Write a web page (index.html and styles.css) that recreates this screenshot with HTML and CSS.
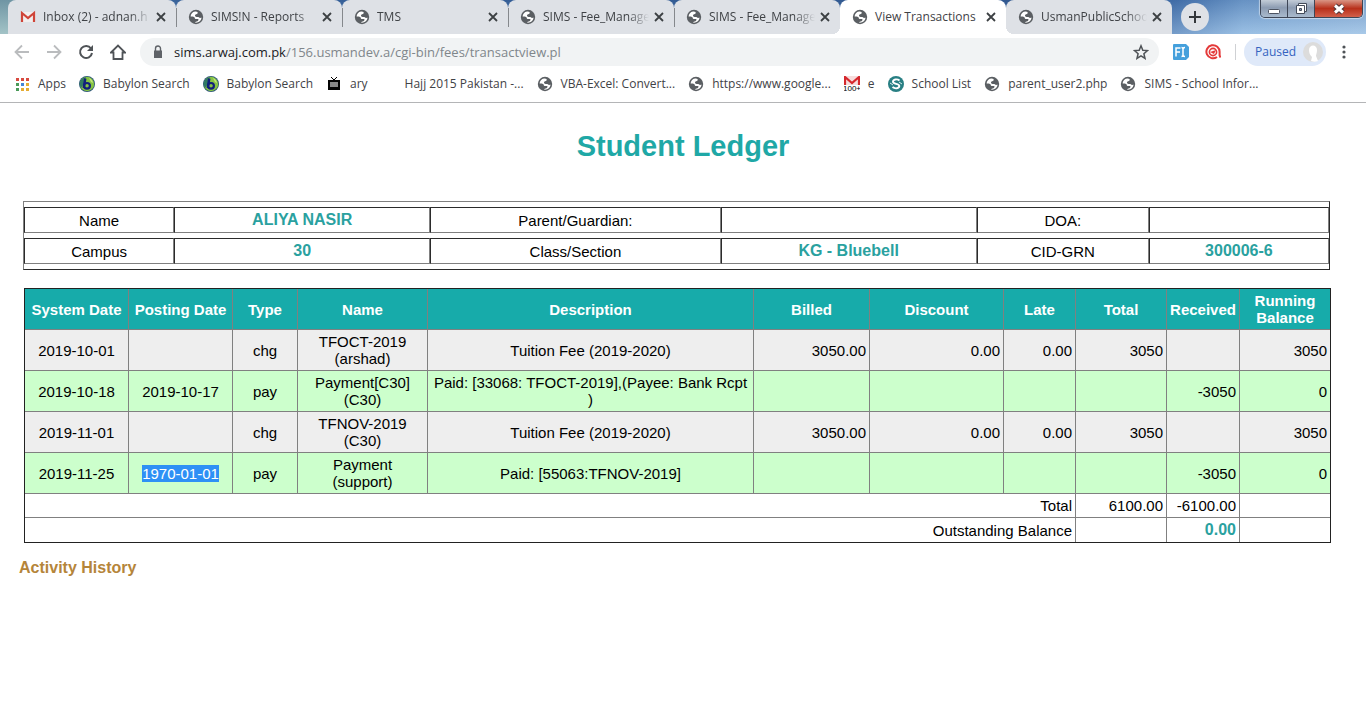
FILE: index.html
```html
<!DOCTYPE html>
<html lang="en">
<head>
<meta charset="utf-8">
<title>View Transactions</title>
<link rel="stylesheet" href="styles.css">
</head>
<body>
<svg class="defs" aria-hidden="true">
  <symbol id="globe" viewBox="0 0 16 16">
    <circle cx="8" cy="8" r="7.200" fill="#5b5f63"/>
    <path d="M7 2.600C4.500 3 2.700 5 2.600 7.500c1.300.2 2.700.1 3.500.6 1 .6.300 1.500 1.300 1.900 1 .3 1.700-.3 2.700.1.900.5.200 1.700-.6 2.100l-1.700.5c-.5.200-.7.600-.5 1 2 .100 4.300-.700 5.500-2.600.5-.8.700-1.600.7-2.500-.9.300-1.900.300-2.500-.3-.6-.6-1.500-.3-2.400-.4-1-.2-1.600-1-1.100-1.800.4-.7 1.600-.3 2.200-.9.500-.5-.1-1.300.3-1.900-.9-.6-2-.8-3-.700z" fill="#fff"/>
    <path d="M9.500 3.200c.5 1-.2 2-1.200 2.100-1 .2-1.500.9-1.200 1.700.5 1 2.300.4 3.300 1 .8.500 2 .7 2.900.2A5.600 5.600 0 0 0 9.500 3.200z" fill="#5b5f63"/>
  </symbol>
  <symbol id="close" viewBox="0 0 16 16"><path d="M4 4l8 8M12 4l-8 8" stroke="#3c4043" stroke-width="1.800" fill="none"/></symbol>
  <symbol id="babylon" viewBox="0 0 16 16">
    <circle cx="8" cy="8" r="8" fill="#2b5578"/>
    <circle cx="8" cy="8" r="7.200" fill="#86c443"/>
    <path d="M2 4a7 7 0 0 1 5-3L5 8l-3 4A7 7 0 0 1 2 4z" fill="#317b62"/>
    <path d="M10 2a6.500 6.500 0 0 1 4 5l-2-1z" fill="#c4e57c"/>
    <path d="M6.300 2.500L4.700 12" stroke="#12207c" stroke-width="2.400"/>
    <ellipse cx="8" cy="9.800" rx="2.900" ry="2.800" fill="none" stroke="#12207c" stroke-width="2.200"/>
  </symbol>
</svg>

<header class="browser">
  <div class="strip">
    <div class="tab tab-first">
      <svg class="icon" viewBox="0 0 16 16"><path d="M2 3h12v10H2z" fill="#f1eeee"/><path d="M2 13V4l6 5 6-5v9" fill="none" stroke="#cf4438" stroke-width="2.200"/></svg>
      <span class="tab-title">Inbox (2) - adnan.h</span>
      <button class="tab-close" aria-label="Close tab"><svg class="icon"><use href="#close"/></svg></button>
    </div>
    <div class="tab"><svg class="icon"><use href="#globe"/></svg><span class="tab-title">SIMS!N - Reports</span><button class="tab-close" aria-label="Close tab"><svg class="icon"><use href="#close"/></svg></button></div>
    <div class="tab"><svg class="icon"><use href="#globe"/></svg><span class="tab-title">TMS</span><button class="tab-close" aria-label="Close tab"><svg class="icon"><use href="#close"/></svg></button></div>
    <div class="tab"><svg class="icon"><use href="#globe"/></svg><span class="tab-title">SIMS - Fee_Manage</span><button class="tab-close" aria-label="Close tab"><svg class="icon"><use href="#close"/></svg></button></div>
    <div class="tab"><svg class="icon"><use href="#globe"/></svg><span class="tab-title">SIMS - Fee_Manage</span><button class="tab-close" aria-label="Close tab"><svg class="icon"><use href="#close"/></svg></button></div>
    <div class="tab tab-active"><svg class="icon"><use href="#globe"/></svg><span class="tab-title">View Transactions</span><button class="tab-close" aria-label="Close tab"><svg class="icon"><use href="#close"/></svg></button></div>
    <div class="tab tab-last"><svg class="icon"><use href="#globe"/></svg><span class="tab-title">UsmanPublicSchoo</span><button class="tab-close" aria-label="Close tab"><svg class="icon"><use href="#close"/></svg></button></div>
    <button class="new-tab" aria-label="New tab"><svg class="icon" viewBox="0 0 16 16"><path d="M8 2v12M2 8h12" stroke="#33373b" stroke-width="2"/></svg></button>
    <div class="window-buttons">
      <button class="win" aria-label="Minimize"><svg class="icon" viewBox="0 0 16 16"><rect x="2.500" y="8.500" width="11" height="4" rx="1" fill="#fff" stroke="#4c5361"/></svg></button>
      <button class="win" aria-label="Restore"><svg class="icon" viewBox="0 0 16 16"><path d="M5.500 2.500h8v8h-8z" fill="#fff" stroke="#444c5a"/><path d="M3.500 4.500h8v8h-8z" fill="#fff" stroke="#444c5a"/><path d="M6.500 7.500h2v2h-2z" fill="#8799b3" stroke="#444c5a"/></svg></button>
      <button class="win win-close" aria-label="Close"><svg class="icon" viewBox="0 0 16 16"><path d="M4 4.500l8 7M12 4.500l-8 7" stroke="#4b3337" stroke-width="5"/><path d="M4 4.500l8 7M12 4.500l-8 7" stroke="#fff" stroke-width="3"/></svg></button>
    </div>
  </div>

  <div class="toolbar">
    <button class="tool" aria-label="Back"><svg class="icon" viewBox="0 0 16 16"><path d="M15 8H2M8 1.500L1.500 8 8 14.500" fill="none" stroke="#babcbe" stroke-width="1.800"/></svg></button>
    <button class="tool" aria-label="Forward"><svg class="icon" viewBox="0 0 16 16"><path d="M1 8h13M8 1.500L14.500 8 8 14.500" fill="none" stroke="#babcbe" stroke-width="1.800"/></svg></button>
    <button class="tool" aria-label="Reload"><svg class="icon" viewBox="0 0 16 16"><path d="M13 4.500A6 6 0 1 0 14 9" fill="none" stroke="#4f5357" stroke-width="2"/><path d="M15 1v6H9z" fill="#4f5357"/></svg></button>
    <button class="tool" aria-label="Home"><svg class="icon" viewBox="0 0 16 16"><path d="M1 8.500L8 1.500l7 7h-2.500V15h-9V8.500z" fill="none" stroke="#4f5357" stroke-width="1.800"/></svg></button>
    <div class="omnibox">
      <svg class="icon" viewBox="0 0 16 16"><path d="M4 6.500h8V14H4z" fill="#5f6368"/><path d="M5.500 7V4.500a2.500 2.500 0 0 1 5 0V7" fill="none" stroke="#5f6368" stroke-width="1.400"/></svg>
      <span class="url">sims.arwaj.com.pk<span class="url-path">/156.usmandev.a/cgi-bin/fees/transactview.pl</span></span>
      <button class="tool star" aria-label="Bookmark this page"><svg class="icon" viewBox="0 0 16 16"><path d="M8 1.800l1.800 4.400 4.700.4-3.600 3.100 1.100 4.600L8 11.800l-4 2.500 1.100-4.600L1.500 6.600l4.700-.4z" fill="none" stroke="#4f5357" stroke-width="1.500"/></svg></button>
    </div>
    <div class="extensions">
      <button class="tool" aria-label="Form filler"><svg class="icon" viewBox="0 0 16 16"><path d="M1 0h12l3 3v10l-3 3H1a1 1 0 0 1-1-1V1a1 1 0 0 1 1-1z" fill="#45a0dc"/><path d="M3 12.500V4h4.500M3 8h4M8.500 3.500c1 0 1.500.5 1.500 1.500v6c0 1-.5 1.500-1.500 1.500M12 3.500c-1.200 0-2 .5-2 1.500M12 12.500c-1.200 0-2-.5-2-1.500" fill="none" stroke="#fff" stroke-width="1.500"/></svg></button>
      <button class="tool" aria-label="Search extension"><svg class="icon" viewBox="0 0 16 16"><path d="M12 13a6.600 6.600 0 1 1 2.600-5v3.500l1 2" fill="none" stroke="#e43a3a" stroke-width="2"/><circle cx="8" cy="8" r="3.600" fill="none" stroke="#e43a3a" stroke-width="1.600"/><path d="M5 8l6-2-2 4z" fill="#e43a3a"/></svg></button>
    </div>
    <button class="profile">Paused <svg class="avatar" viewBox="0 0 20 20"><circle cx="10" cy="10" r="10" fill="#dcdcdc"/><path d="M6 8c0-6 8-6 8 0 0 3-1 4-1 6l2 5a10 10 0 0 1-7 0l1-4C7 13 6 11 6 8z" fill="#fff"/></svg></button>
    <button class="tool" aria-label="Menu"><svg class="icon" viewBox="0 0 16 16" fill="#4f5357"><circle cx="8" cy="3" r="1.600"/><circle cx="8" cy="8" r="1.600"/><circle cx="8" cy="13" r="1.600"/></svg></button>
  </div>

  <nav class="bookmarks">
    <a class="bookmark" href="#"><svg class="icon" viewBox="0 0 16 16"><path d="M2 2h3v3H2zM7 2h3v3H7zM12 2h3v3h-3z" fill="#d84a40"/><path d="M2 7h3v3H2zM2 12h3v3H2z" fill="#4a9a59"/><path d="M7 7h3v3H7z" fill="#4285d8"/><path d="M12 7h3v3h-3zM7 12h3v3H7zM12 12h3v3h-3z" fill="#e5ac33"/></svg>Apps</a>
    <a class="bookmark" href="#"><svg class="icon"><use href="#babylon"/></svg>Babylon Search</a>
    <a class="bookmark" href="#"><svg class="icon"><use href="#babylon"/></svg>Babylon Search</a>
    <a class="bookmark" href="#"><svg class="icon" viewBox="0 0 16 16"><path d="M5 1l3 3 3-3" fill="none" stroke="#000"/><path d="M2 4h12v10H2z" fill="#050505"/><path d="M4 6h8v5H4z" fill="#888"/></svg>ary</a>
    <a class="bookmark" href="#"><span class="icon"></span>Hajj 2015 Pakistan -...</a>
    <a class="bookmark" href="#"><svg class="icon"><use href="#globe"/></svg>VBA-Excel: Convert...</a>
    <a class="bookmark" href="#"><svg class="icon"><use href="#globe"/></svg>https://www.google...</a>
    <a class="bookmark" href="#"><svg class="icon" viewBox="0 0 16 16"><path d="M0 0h16v9H0z" fill="#f7dddd"/><path d="M1 9V1l7 6 7-6v8" fill="none" stroke="#d5282d" stroke-width="2.200"/><text x="8" y="15" text-anchor="middle" class="badge">100+</text></svg>e</a>
    <a class="bookmark" href="#"><svg class="icon" viewBox="0 0 16 16"><circle cx="8" cy="8" r="8" fill="#287f83"/><path d="M11.500 4.500C9 2.500 5 3.500 5 5.800c0 2.800 6.300 1.400 6.300 4.300 0 2.500-4.300 3-6.800 1" fill="none" stroke="#fff" stroke-width="1.900"/><path d="M2 7l3 2M14 8l-3-2" stroke="#d7eeee"/></svg>School List</a>
    <a class="bookmark" href="#"><svg class="icon"><use href="#globe"/></svg>parent_user2.php</a>
    <a class="bookmark" href="#"><svg class="icon"><use href="#globe"/></svg>SIMS - School Infor...</a>
  </nav>
</header>

<main class="page">
  <h1 class="title">Student Ledger</h1>

  <div class="tables">
    <table class="info">
      <colgroup><col class="w150"><col class="w256"><col class="w290"><col class="w256"><col class="w172"><col class="w180"></colgroup>
      <tbody>
        <tr><td>Name</td><td class="value">ALIYA NASIR</td><td>Parent/Guardian:</td><td class="value"></td><td>DOA:</td><td class="value"></td></tr>
        <tr><td>Campus</td><td class="value">30</td><td>Class/Section</td><td class="value">KG - Bluebell</td><td>CID-GRN</td><td class="value">300006-6</td></tr>
      </tbody>
    </table>

    <table class="ledger">
      <colgroup><col class="w104"><col class="w104"><col class="w65"><col class="w130"><col class="w326"><col class="w116"><col class="w134"><col class="w72"><col class="w91"><col class="w73"><col class="w90"></colgroup>
      <thead>
        <tr><th>System Date</th><th>Posting Date</th><th>Type</th><th>Name</th><th>Description</th><th>Billed</th><th>Discount</th><th>Late</th><th>Total</th><th>Received</th><th>Running Balance</th></tr>
      </thead>
      <tbody>
        <tr class="charge"><td>2019-10-01</td><td></td><td>chg</td><td>TFOCT-2019<br>(arshad)</td><td>Tuition Fee (2019-2020)</td><td class="num">3050.00</td><td class="num">0.00</td><td class="num">0.00</td><td class="num">3050</td><td class="num"></td><td class="num">3050</td></tr>
        <tr class="payment"><td>2019-10-18</td><td>2019-10-17</td><td>pay</td><td>Payment[C30]<br>(C30)</td><td>Paid: [33068: TFOCT-2019],(Payee: Bank Rcpt )</td><td></td><td></td><td></td><td></td><td class="num">-3050</td><td class="num">0</td></tr>
        <tr class="charge"><td>2019-11-01</td><td></td><td>chg</td><td>TFNOV-2019<br>(C30)</td><td>Tuition Fee (2019-2020)</td><td class="num">3050.00</td><td class="num">0.00</td><td class="num">0.00</td><td class="num">3050</td><td class="num"></td><td class="num">3050</td></tr>
        <tr class="payment"><td>2019-11-25</td><td><span class="selected">1970-01-01</span></td><td>pay</td><td>Payment<br>(support)</td><td>Paid: [55063:TFNOV-2019]</td><td></td><td></td><td></td><td></td><td class="num">-3050</td><td class="num">0</td></tr>
      </tbody>
      <tfoot>
        <tr><td class="num" colspan="8">Total</td><td class="num">6100.00</td><td class="num">-6100.00</td><td></td></tr>
        <tr><td class="num" colspan="8">Outstanding Balance</td><td></td><td class="num value">0.00</td><td></td></tr>
      </tfoot>
    </table>
  </div>

  <a class="history" href="#">Activity History</a>
</main>
</body>
</html>
```
FILE: styles.css
```css
* { box-sizing: border-box; }

body {
  margin: 0;
  background: #fff;
  color: #000;
  font: 15px/17px "Liberation Sans", Arial, sans-serif;
}

button {
  margin: 0;
  padding: 0;
  border: 0;
  background: none;
  font: inherit;
  color: inherit;
}

a { text-decoration: none; }

.defs { position: absolute; width: 0; height: 0; }
.icon { display: block; flex: none; width: 16px; height: 16px; }

/* Browser frame */
.browser {
  font: 12px/16px "Open Sans", "Noto Sans", sans-serif;
  color: #3f4246;
  border-bottom: 1px solid #b4b5b7;
}

.strip {
  display: flex;
  align-items: center;
  height: 34px;
  padding: 0 3px 0 8px;
  background:
    linear-gradient(to bottom, rgba(40, 80, 140, .3), rgba(200, 225, 245, .35)),
    linear-gradient(to right, #8fb3ae 0, #8fb3ae 8px, #3d689f 180px, #31588f 80%, #4a78b2 86%, #82aedb 91%, #98bde2 100%);
}

.tab {
  position: relative;
  display: flex;
  align-items: center;
  flex: 0 1 166px;
  min-width: 0;
  height: 34px;
  padding: 0 7px 0 12px;
  background: #dee1e6;
  border-radius: 8px 8px 0 0;
}

.tab-first { flex-basis: 168px; }

.tab + .tab::before {
  content: "";
  position: absolute;
  left: 0;
  top: 8px;
  width: 1px;
  height: 19px;
  background: #85888c;
}

.tab + .tab-active::before,
.tab + .tab-last::before { display: none; }

.tab-active { background: #fff; }

.tab-active::after {
  content: "";
  position: absolute;
  left: -8px;
  right: -8px;
  bottom: 0;
  height: 8px;
  background:
    radial-gradient(circle at 0 0, transparent 8px, #fff 8px) left / 8px 8px no-repeat,
    radial-gradient(circle at 100% 0, transparent 8px, #fff 8px) right / 8px 8px no-repeat;
  z-index: 1;
}

.tab-title {
  flex: 1;
  min-width: 0;
  margin: 0 2px 0 7px;
  white-space: nowrap;
  -webkit-mask-image: linear-gradient(to right, #000 80%, transparent);
  mask-image: linear-gradient(to right, #000 80%, transparent);
}

.tab-active .tab-title { -webkit-mask-image: none; mask-image: none; }

.new-tab {
  display: grid;
  place-items: center;
  flex: none;
  width: 28px;
  height: 28px;
  margin-left: 9px;
  border-radius: 50%;
  background: #dee1e6;
}

.window-buttons {
  display: flex;
  align-self: flex-start;
  height: 18px;
  margin-left: auto;
  border: 1px solid #3e4656;
  border-top: 0;
  border-radius: 0 0 5px 5px;
  overflow: hidden;
  box-shadow: 0 0 1px 1px rgba(255, 255, 255, .5);
}

.win {
  display: grid;
  place-items: center;
  width: 27px;
  border-right: 1px solid #3e4656;
  background: linear-gradient(to bottom, #c3ccd7, #8d9cb2 45%, #a9bacd);
}

.win-close {
  width: 47px;
  border-right: 0;
  background: linear-gradient(to bottom, #d99585, #b8301b 50%, #d2604a);
}

.toolbar {
  display: flex;
  align-items: center;
  height: 36px;
  padding: 0 14px;
}

.tool { flex: none; width: 16px; height: 16px; margin-right: 16px; }

.omnibox {
  display: flex;
  align-items: center;
  flex: 1;
  min-width: 0;
  height: 28px;
  margin-right: 14px;
  margin-left: -2px;
  padding: 0 10px;
  border-radius: 14px;
  background: #f1f3f4;
}

.url {
  flex: 1;
  min-width: 0;
  margin-left: 8px;
  overflow: hidden;
  white-space: nowrap;
  font-size: 13px;
  line-height: 20px;
  color: #202124;
}

.url-path { color: #80868b; }
.star { margin-right: 0; }

.extensions {
  display: flex;
  margin-right: 8px;
  border-right: 1px solid #cfd1d4;
}

.extensions .tool:last-child { margin-right: 14px; }

.profile {
  display: flex;
  align-items: center;
  justify-content: space-between;
  flex: none;
  width: 82px;
  height: 28px;
  margin-right: 10px;
  padding: 0 3px 0 11px;
  border-radius: 14px;
  background: #dfe9f9;
  color: #3563c0;
}

.avatar { width: 20px; height: 20px; }
.toolbar > .tool:last-child { margin-right: 0; }

.bookmarks {
  display: flex;
  align-items: center;
  gap: 13px;
  height: 32px;
  padding: 0 12px 4px 14px;
  overflow: hidden;
}

.bookmark {
  display: flex;
  align-items: center;
  gap: 8px;
  flex: none;
  white-space: nowrap;
  color: #3f4246;
}

.badge { font: 8px "Liberation Sans", sans-serif; fill: #000; }

/* Ledger page */
.page { padding: 27px 0; }

.title {
  margin: 0 0 39px;
  font-size: 29px;
  line-height: 32px;
  text-align: center;
  color: #1fa8a6;
}

.tables { padding: 0 35px 0 24px; }

table {
  width: 100%;
  table-layout: fixed;
  text-align: center;
}

.info {
  margin-left: -1px;
  border: 1px solid;
  border-color: #808080 #2b2b2b #2b2b2b #808080;
  border-spacing: 0 5px;
}

.info td {
  height: 26px;
  padding: 3px;
  border: 1px solid;
  border-color: #2b2b2b #808080 #808080 #2b2b2b;
}

.value {
  font-size: 16px;
  line-height: 18px;
  font-weight: bold;
  color: #2aa19f;
}

.ledger {
  margin-top: 18px;
  border: 1px solid #222;
  border-spacing: 0;
}

.ledger th,
.ledger td {
  padding: 3px;
  border: 0 solid #808080;
  border-width: 0 1px 1px 0;
}

.ledger tr > :last-child { border-right: 0; }
.ledger tfoot tr:last-child td { border-bottom: 0; }

.ledger th { padding-inline: 2px; background: #17abaa; color: #fff; }
.ledger .num { text-align: right; }
.charge { background: #eee; }
.payment { background: #cfc; }
.selected { background: #2e90f5; color: #fff; }

.history {
  display: inline-block;
  margin: 16px 0 0 19px;
  font-size: 16px;
  line-height: 18px;
  font-weight: bold;
  color: #b5853a;
}

.w65 { width: 65px; }
.w72 { width: 72px; }
.w73 { width: 73px; }
.w90 { width: 90px; }
.w91 { width: 91px; }
.w104 { width: 104px; }
.w116 { width: 116px; }
.w130 { width: 130px; }
.w134 { width: 134px; }
.w150 { width: 150px; }
.w172 { width: 172px; }
.w180 { width: 180px; }
.w256 { width: 256px; }
.w290 { width: 290px; }
.w326 { width: 326px; }
```
